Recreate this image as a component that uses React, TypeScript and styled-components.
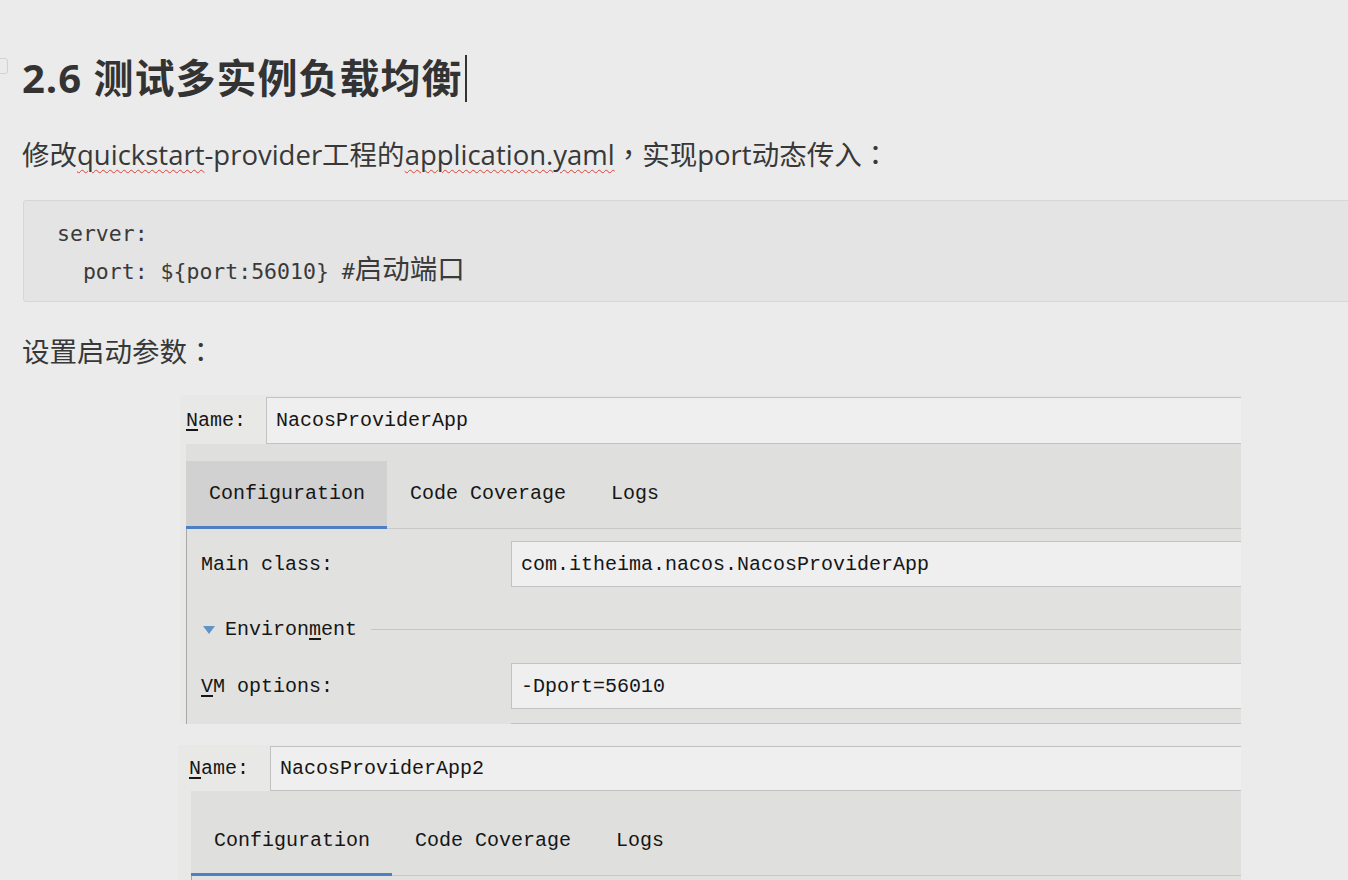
import * as React from 'react';
import styled, { createGlobalStyle } from 'styled-components';

const GlobalStyle = createGlobalStyle`
  html, body {
    margin: 0;
    padding: 0;
    background: #ebebeb;
  }
  body {
    overflow: hidden;
  }
`;

const Page = styled.div`
  position: relative;
  width: 1348px;
  height: 880px;
  overflow: hidden;
  box-sizing: border-box;
  padding: 54px 0 0 22px;
  font-family: "Open Sans", "Noto Sans CJK SC", sans-serif;
  color: #333;
`;

const GutterMark = styled.div`
  position: absolute;
  left: -8px;
  top: 58px;
  width: 14px;
  height: 14px;
  border: 1px solid #d2d2d2;
  border-radius: 3px;
`;

const Heading = styled.h2`
  display: flex;
  align-items: center;
  margin: 0;
  font-size: 40px;
  line-height: 48px;
  font-weight: 700;
  letter-spacing: 1px;
  color: #333;
`;

const Caret = styled.span`
  display: inline-block;
  width: 2px;
  height: 47px;
  margin-left: 2px;
  background: #333;
`;

const Paragraph = styled.p<{ $gap: number }>`
  height: 40px;
  margin: ${p => p.$gap}px 0 0;
  font-size: 27.5px;
  line-height: 40px;
  color: #383838;
  white-space: nowrap;
`;

// full-width punctuation sits centred in its cell, as in the original
const Punct = styled.span`
  font-family: "Noto Sans CJK TC", "Noto Sans CJK SC", sans-serif;
  line-height: 0;
`;

const Misspelled = styled.span`
  text-decoration: underline wavy #d9413b;
  text-decoration-thickness: 1px;
  text-underline-offset: 4px;
`;

const CodeBlock = styled.pre`
  width: 1400px;
  margin: 25px 0 0 1px;
  padding: 14px 0 10px 33px;
  background: #e4e4e4;
  border: 1px solid #d6d6d6;
  border-radius: 3px;
  font-family: "DejaVu Sans Mono", "Noto Sans CJK SC", monospace;
  font-size: 21.5px;
  line-height: 38px;
  color: #3a3a3a;
`;

const Comment = styled.span`
  font-size: 27.5px;
  line-height: 0;
`;

/* IDE run-configuration screenshot */

const Shot = styled.div<{ $left: number; $height?: number }>`
  margin-left: ${p => p.$left}px;
  width: ${p => 1241 - 22 - p.$left}px;
  ${p => (p.$height ? `height: ${p.$height}px;` : '')}
  overflow: hidden;
  background: #e8e8e7;
  font-family: "Liberation Mono", "Noto Sans CJK SC", monospace;
  font-size: 20px;
  color: #161616;
`;

const NameRow = styled.div<{ $pad: number; $top: number }>`
  display: flex;
  align-items: center;
  padding: ${p => p.$top}px 0 0 ${p => p.$pad}px;
`;

const NameLabel = styled.span<{ $width: number }>`
  flex: none;
  width: ${p => p.$width}px;
`;

const Mnemonic = styled.u`
  text-underline-offset: 3px;
`;

const TextField = styled.div<{ $height: number }>`
  flex: 1;
  display: flex;
  align-items: center;
  box-sizing: border-box;
  height: ${p => p.$height}px;
  padding-left: 9px;
  background: #efefef;
  border: 1px solid #c2c2c2;
  border-right: none;
  white-space: nowrap;
`;

const TabStrip = styled.div<{ $pad: number }>`
  display: flex;
  align-items: flex-end;
  height: 85px;
  margin-left: ${p => p.$pad}px;
  background: #dfe0de;
  box-shadow: inset 0 -1px #c8c8c8;
`;

const Tab = styled.div<{ $active?: boolean; $shaded?: boolean; $height: number }>`
  display: flex;
  align-items: center;
  box-sizing: border-box;
  height: ${p => p.$height}px;
  padding: 0 22px 0 23px;
  background: ${p => (p.$active && p.$shaded ? '#d1d1d1' : 'transparent')};
  border-bottom: 3px solid ${p => (p.$active ? '#4c80c2' : 'transparent')};
`;

const Panel = styled.div<{ $pad: number }>`
  display: flow-root;
  margin-left: ${p => p.$pad}px;
  padding-left: 14px;
  height: 200px;
  background: #e1e2e0;
  border-left: 1px solid #a8a8a8;
`;

const FormRow = styled.div<{ $gap: number }>`
  display: flex;
  align-items: center;
  margin-top: ${p => p.$gap}px;
`;

const FormLabel = styled.span`
  flex: none;
  width: 310px;
`;

const Section = styled.div`
  display: flex;
  align-items: center;
  height: 42px;
  margin-top: 21px;
`;

const Disclosure = styled.span`
  flex: none;
  width: 0;
  height: 0;
  margin: 2px 10px 0 2px;
  border-left: 6px solid transparent;
  border-right: 6px solid transparent;
  border-top: 8px solid #5f95c6;
`;

const Rule = styled.span`
  flex: 1;
  height: 1px;
  margin-left: 14px;
  background: #c6c6c6;
`;

interface ShotProps {
  name: string;
  left: number;
  pad: number;
  top: number;
  nameHeight: number;
  labelWidth: number;
  tabPad: number;
  tabHeight: number;
  shadedTab: boolean;
  height?: number;
}

const RunConfig = ({ name, left, pad, top, nameHeight, labelWidth, tabPad, tabHeight, shadedTab, height }: ShotProps) => (
  <Shot $left={left} $height={height}>
    <NameRow $pad={pad} $top={top}>
      <NameLabel $width={labelWidth}>
        <Mnemonic>N</Mnemonic>ame:
      </NameLabel>
      <TextField $height={nameHeight}>{name}</TextField>
    </NameRow>
    <TabStrip $pad={tabPad}>
      <Tab $active $shaded={shadedTab} $height={tabHeight}>Configuration</Tab>
      <Tab $height={tabHeight}>Code Coverage</Tab>
      <Tab $height={tabHeight}>Logs</Tab>
    </TabStrip>
    <Panel $pad={tabPad}>
      <FormRow $gap={12}>
        <FormLabel>Main class:</FormLabel>
        <TextField $height={46}>com.itheima.nacos.NacosProviderApp</TextField>
      </FormRow>
      <Section>
        <Disclosure />
        Environ<Mnemonic>m</Mnemonic>ent
        <Rule />
      </Section>
      <FormRow $gap={13}>
        <FormLabel>
          <Mnemonic>V</Mnemonic>M options:
        </FormLabel>
        <TextField $height={46}>-Dport=56010</TextField>
      </FormRow>
      <FormRow $gap={14}>
        <FormLabel />
        <TextField $height={46} />
      </FormRow>
    </Panel>
  </Shot>
);

const Spacer = styled.div<{ $h: number }>`
  height: ${p => p.$h}px;
`;

const App = () => (
  <Page>
    <GlobalStyle />
    <GutterMark />
    <Heading>
      2.6 测试多实例负载均衡
      <Caret />
    </Heading>
    <Paragraph $gap={33}>
      修改<Misspelled>quickstart</Misspelled>-provider工程的<Misspelled>application.yaml</Misspelled>
      <Punct>，</Punct>实现port动态传入<Punct>：</Punct>
    </Paragraph>
    <CodeBlock>
      {'server:\n  port: ${port:56010} #'}
      <Comment>启动端口</Comment>
    </CodeBlock>
    <Paragraph $gap={30}>
      设置启动参数<Punct>：</Punct>
    </Paragraph>
    <Spacer $h={23} />
    <RunConfig
      name="NacosProviderApp"
      left={158}
      pad={6}
      top={2}
      nameHeight={47}
      labelWidth={80}
      tabPad={6}
      tabHeight={68}
      shadedTab
      height={329}
    />
    <Spacer $h={21} />
    <RunConfig
      name="NacosProviderApp2"
      left={156}
      pad={11}
      top={1}
      nameHeight={45}
      labelWidth={81}
      tabPad={13}
      tabHeight={69}
      shadedTab={false}
    />
  </Page>
);

export default App;
